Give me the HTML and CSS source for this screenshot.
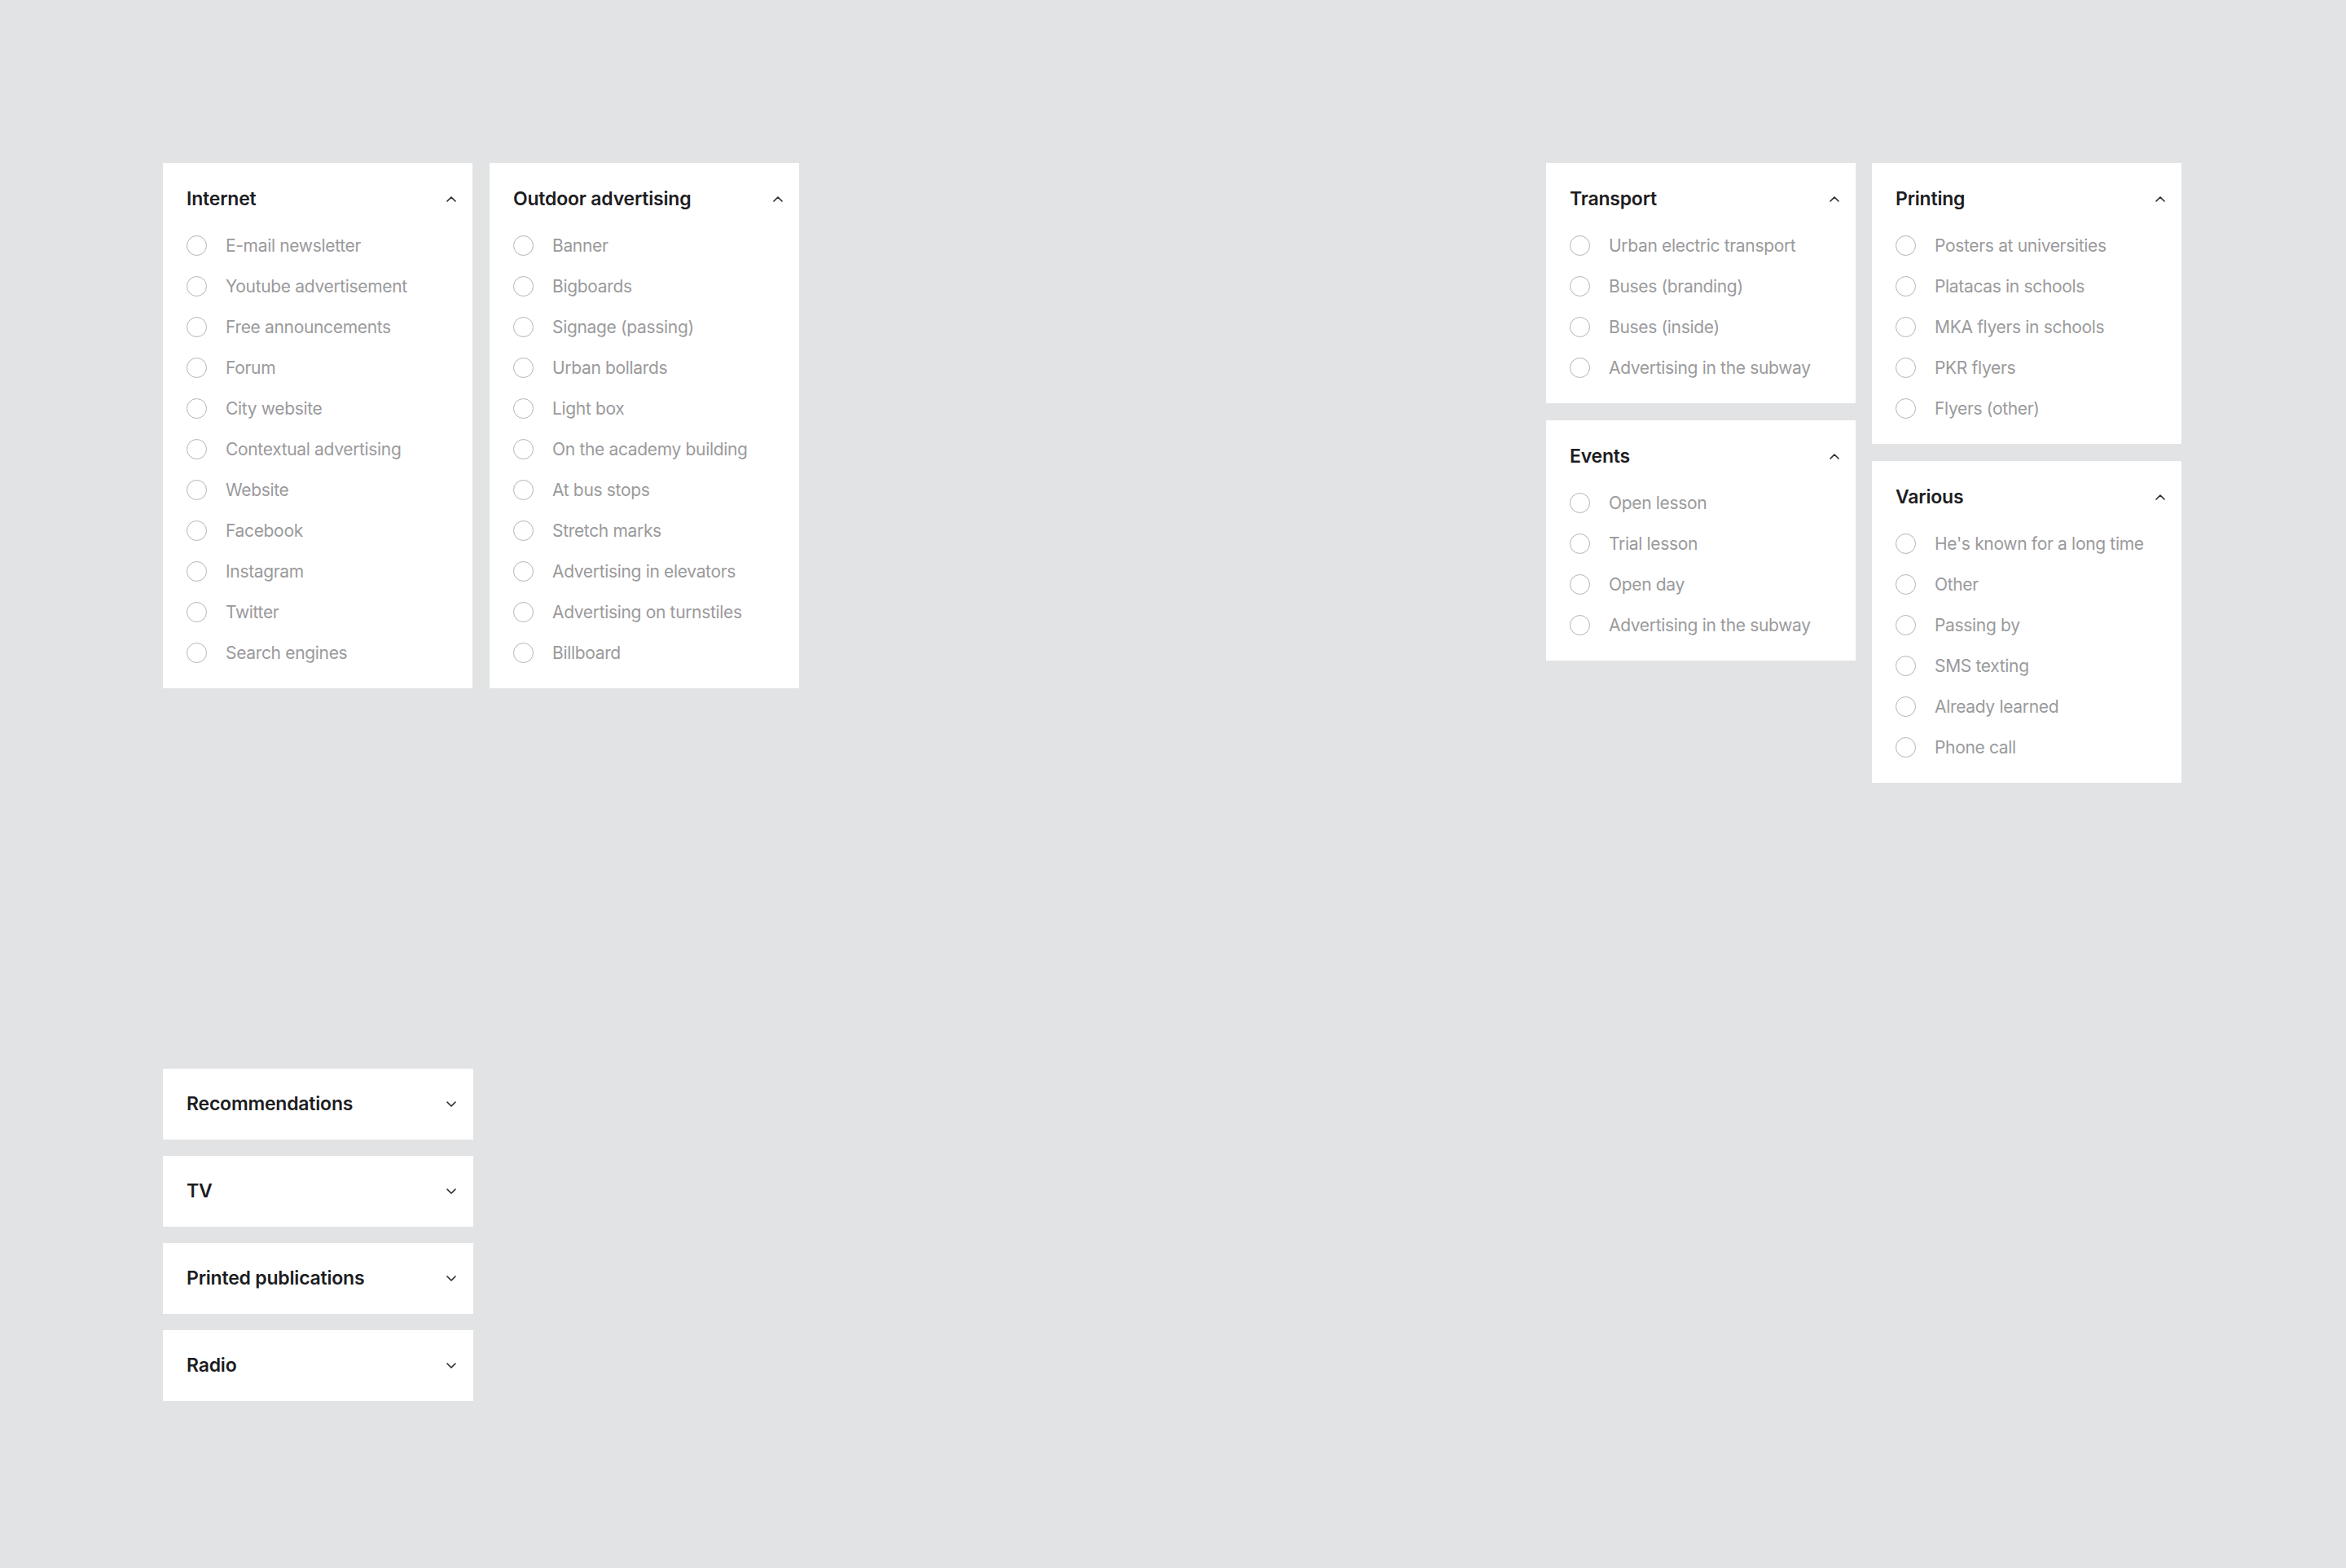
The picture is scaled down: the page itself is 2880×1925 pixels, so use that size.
FILE: index.html
```html
<!DOCTYPE html>
<html lang="en">
<head>
<meta charset="utf-8">
<title>Advertising sources</title>
<link rel="stylesheet" href="styles.css">
</head>
<body>
<div class="page">
  <div class="top-row">
    <div class="group">
      <div class="column">
        <section class="card">
          <header class="card-head"><h2 class="card-title">Internet</h2><svg class="chev" viewBox="0 0 12 7"><polyline points="1,6 6,1 11,6"/></svg></header>
          <ul class="options">
            <li class="option"><span class="radio"></span>E-mail newsletter</li>
            <li class="option"><span class="radio"></span>Youtube advertisement</li>
            <li class="option"><span class="radio"></span>Free announcements</li>
            <li class="option"><span class="radio"></span>Forum</li>
            <li class="option"><span class="radio"></span>City website</li>
            <li class="option"><span class="radio"></span>Contextual advertising</li>
            <li class="option"><span class="radio"></span>Website</li>
            <li class="option"><span class="radio"></span>Facebook</li>
            <li class="option"><span class="radio"></span>Instagram</li>
            <li class="option"><span class="radio"></span>Twitter</li>
            <li class="option"><span class="radio"></span>Search engines</li>
          </ul>
        </section>
      </div>
      <div class="column">
        <section class="card">
          <header class="card-head"><h2 class="card-title">Outdoor advertising</h2><svg class="chev" viewBox="0 0 12 7"><polyline points="1,6 6,1 11,6"/></svg></header>
          <ul class="options">
            <li class="option"><span class="radio"></span>Banner</li>
            <li class="option"><span class="radio"></span>Bigboards</li>
            <li class="option"><span class="radio"></span>Signage (passing)</li>
            <li class="option"><span class="radio"></span>Urban bollards</li>
            <li class="option"><span class="radio"></span>Light box</li>
            <li class="option"><span class="radio"></span>On the academy building</li>
            <li class="option"><span class="radio"></span>At bus stops</li>
            <li class="option"><span class="radio"></span>Stretch marks</li>
            <li class="option"><span class="radio"></span>Advertising in elevators</li>
            <li class="option"><span class="radio"></span>Advertising on turnstiles</li>
            <li class="option"><span class="radio"></span>Billboard</li>
          </ul>
        </section>
      </div>
    </div>
    <div class="group group--right">
      <div class="column">
        <section class="card">
          <header class="card-head"><h2 class="card-title">Transport</h2><svg class="chev" viewBox="0 0 12 7"><polyline points="1,6 6,1 11,6"/></svg></header>
          <ul class="options">
            <li class="option"><span class="radio"></span>Urban electric transport</li>
            <li class="option"><span class="radio"></span>Buses (branding)</li>
            <li class="option"><span class="radio"></span>Buses (inside)</li>
            <li class="option"><span class="radio"></span>Advertising in the subway</li>
          </ul>
        </section>
        <section class="card">
          <header class="card-head"><h2 class="card-title">Events</h2><svg class="chev" viewBox="0 0 12 7"><polyline points="1,6 6,1 11,6"/></svg></header>
          <ul class="options">
            <li class="option"><span class="radio"></span>Open lesson</li>
            <li class="option"><span class="radio"></span>Trial lesson</li>
            <li class="option"><span class="radio"></span>Open day</li>
            <li class="option"><span class="radio"></span>Advertising in the subway</li>
          </ul>
        </section>
      </div>
      <div class="column">
        <section class="card">
          <header class="card-head"><h2 class="card-title">Printing</h2><svg class="chev" viewBox="0 0 12 7"><polyline points="1,6 6,1 11,6"/></svg></header>
          <ul class="options">
            <li class="option"><span class="radio"></span>Posters at universities</li>
            <li class="option"><span class="radio"></span>Platacas in schools</li>
            <li class="option"><span class="radio"></span>MKA flyers in schools</li>
            <li class="option"><span class="radio"></span>PKR flyers</li>
            <li class="option"><span class="radio"></span>Flyers (other)</li>
          </ul>
        </section>
        <section class="card">
          <header class="card-head"><h2 class="card-title">Various</h2><svg class="chev" viewBox="0 0 12 7"><polyline points="1,6 6,1 11,6"/></svg></header>
          <ul class="options">
            <li class="option"><span class="radio"></span>He's known for a long time</li>
            <li class="option"><span class="radio"></span>Other</li>
            <li class="option"><span class="radio"></span>Passing by</li>
            <li class="option"><span class="radio"></span>SMS texting</li>
            <li class="option"><span class="radio"></span>Already learned</li>
            <li class="option"><span class="radio"></span>Phone call</li>
          </ul>
        </section>
      </div>
    </div>
  </div>

  <div class="collapsed-stack">
    <section class="card card--collapsed">
      <header class="card-head"><h2 class="card-title">Recommendations</h2><svg class="chev" viewBox="0 0 12 7"><polyline points="1,1 6,6 11,1"/></svg></header>
    </section>
    <section class="card card--collapsed">
      <header class="card-head"><h2 class="card-title">TV</h2><svg class="chev" viewBox="0 0 12 7"><polyline points="1,1 6,6 11,1"/></svg></header>
    </section>
    <section class="card card--collapsed">
      <header class="card-head"><h2 class="card-title">Printed publications</h2><svg class="chev" viewBox="0 0 12 7"><polyline points="1,1 6,6 11,1"/></svg></header>
    </section>
    <section class="card card--collapsed">
      <header class="card-head"><h2 class="card-title">Radio</h2><svg class="chev" viewBox="0 0 12 7"><polyline points="1,1 6,6 11,1"/></svg></header>
    </section>
  </div>
</div>
</body>
</html>
```

FILE: styles.css
```css
* { box-sizing: border-box; }

html, body {
  margin: 0;
  padding: 0;
  background: #e2e3e5;
}

body {
  font-family: Inter, "Noto Sans", "Liberation Sans", sans-serif;
  min-height: 1925px;
}

.page {
  padding: 200px 202px 0 200px;
}

.top-row {
  display: flex;
  justify-content: space-between;
  align-items: flex-start;
}

.group {
  display: flex;
  gap: 21px;
  align-items: flex-start;
}

.group--right {
  gap: 20px;
}

.column {
  display: flex;
  flex-direction: column;
  gap: 21px;
  width: 380px;
}

.card {
  background: #ffffff;
  padding: 29px 20px 19px 29px;
}

.card-head {
  display: flex;
  align-items: center;
  justify-content: space-between;
  height: 30px;
}

.card-title {
  margin: 0;
  font-size: 23px;
  font-weight: 600;
  color: #1d1d1f;
  letter-spacing: -0.2px;
  line-height: 30px;
}

.chev {
  width: 12px;
  height: 7px;
  flex: none;
}

.chev polyline {
  fill: none;
  stroke: #2a2a2a;
  stroke-width: 1.6;
  stroke-linecap: round;
  stroke-linejoin: round;
}

.options {
  list-style: none;
  margin: 17px 0 0 0;
  padding: 0;
}

.option {
  display: flex;
  align-items: center;
  height: 50px;
  font-size: 21px;
  color: #9a9a9c;
  letter-spacing: -0.33px;
}

.radio {
  width: 25px;
  height: 25px;
  border: 1.7px solid #b4b4b6;
  border-radius: 50%;
  margin-right: 23px;
  flex: none;
}

.collapsed-stack {
  margin-top: 351px;
  width: 381px;
  display: flex;
  flex-direction: column;
  gap: 20px;
}

.card--collapsed {
  padding: 28px 21px 29px 29px;
}
```
